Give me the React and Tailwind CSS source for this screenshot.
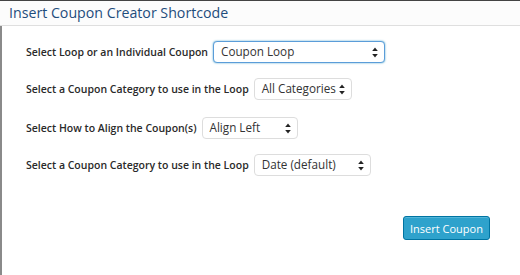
import React from "react";

function Arrows() {
  return (
    <svg width="6" height="11" viewBox="0 0 6 11" className="shrink-0">
      <path d="M3 0.5 L5.8 4 L0.2 4 Z" fill="#222" />
      <path d="M3 10.5 L5.8 7 L0.2 7 Z" fill="#222" />
    </svg>
  );
}

function Sel({ text, w, focus }) {
  return (
    <div
      className={
        "h-[22px] rounded-[4px] bg-white flex items-center justify-between pl-[7px] pr-[6px] text-[11.7px] text-[#333] whitespace-nowrap " +
        (focus
          ? "border border-[#5b9dd9] shadow-[0_0_2px_rgba(30,140,190,0.8)]"
          : "border border-[#ddd]")
      }
      style={{ width: w }}
    >
      <span className="leading-none">{text}</span>
      <Arrows />
    </div>
  );
}

function Row({ label, children, mt }) {
  return (
    <div className={"flex items-center gap-[5px] " + mt}>
      <span className="text-[10.5px] font-semibold text-[#2a2a2a] leading-none whitespace-nowrap">{label}</span>
      {children}
    </div>
  );
}

export default function App() {
  return (
    <div
      className="w-[520px] h-[275px] bg-white overflow-hidden flex flex-col"
      style={{ fontFamily: '"Open Sans", "Noto Sans", sans-serif' }}
    >
      <div className="h-[26px] shrink-0 bg-[#fcfcfc] border-b border-[#dfdfdf] flex items-center pl-[9px] border-t border-t-[#444]">
        <span className="text-[14.2px] text-[#1f4d7c] leading-none">Insert Coupon Creator Shortcode</span>
      </div>
      <div className="flex-1 border-l-2 border-[#8a8a8a] pl-[24px] pt-[15px] flex flex-col">
        <Row label="Select Loop or an Individual Coupon" mt="">
          <Sel text="Coupon Loop" w={172} focus />
        </Row>
        <Row label="Select a Coupon Category to use in the Loop" mt="mt-[15px]">
          <Sel text="All Categories" w={98} />
        </Row>
        <Row label="Select How to Align the Coupon(s)" mt="mt-[17px]">
          <Sel text="Align Left" w={96} />
        </Row>
        <Row label="Select a Coupon Category to use in the Loop" mt="mt-[15px]">
          <Sel text="Date (default)" w={117} />
        </Row>
        <div className="flex justify-end pr-[30px] mt-[40px]">
          <button className="w-[87px] h-[24px] rounded-[3px] bg-[#2ea2cc] border border-[#0074a2] text-white text-[11px] leading-none shadow-[inset_0_1px_0_rgba(120,200,230,0.5)]">
            Insert Coupon
          </button>
        </div>
      </div>
    </div>
  );
}
